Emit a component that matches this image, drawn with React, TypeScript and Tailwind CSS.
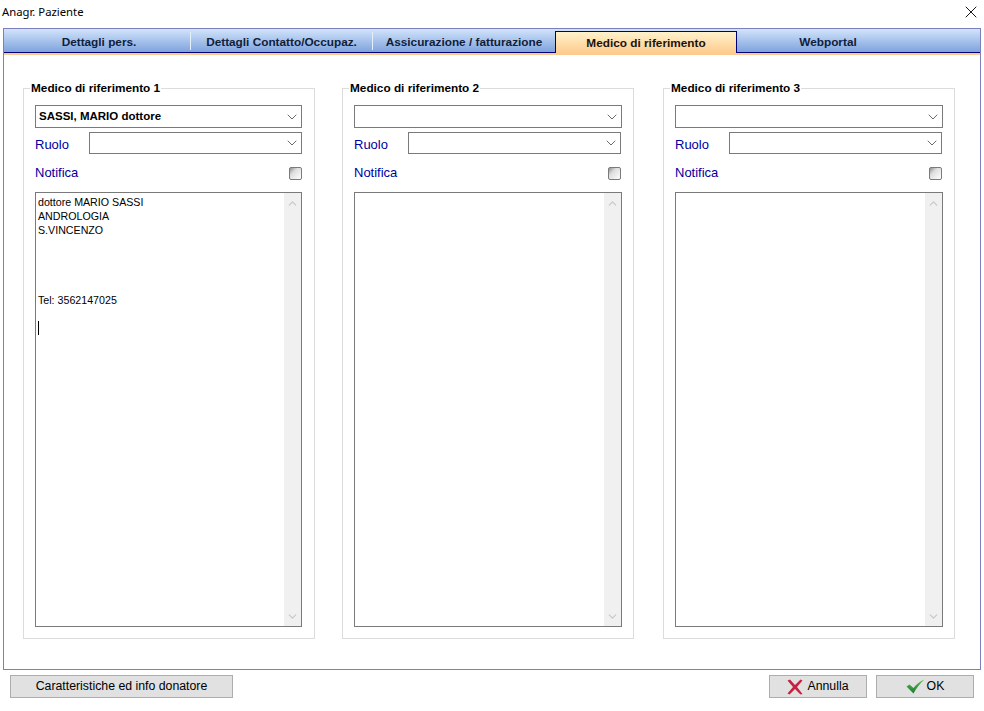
import { ChevronDown, ChevronUp, X } from "lucide-react";

const tabs = [
  { label: "Dettagli pers.", width: "w-[187px] pl-1" },
  { label: "Dettagli Contatto/Occupaz.", width: "w-[182px]" },
  { label: "Assicurazione / fatturazione", width: "w-[182px]" },
  { label: "Medico di riferimento", width: "w-[182px]", active: true },
  { label: "Webportal", width: "w-[182px]" },
];

function Combo({ value, className }: { value?: string; className: string }) {
  return (
    <div
      className={`flex items-center justify-between border border-[#7a7a7a] bg-white pl-[3px] pr-[1px] text-[11.5px] font-bold text-black ${className}`}
    >
      <span>{value}</span>
      <ChevronDown size={16} strokeWidth={1.2} className="text-[#444]" />
    </div>
  );
}

function Referral({
  title,
  className,
  boxWidth,
  lines,
}: {
  title: string;
  className: string;
  boxWidth: string;
  lines?: boolean;
}) {
  return (
    <div className={`relative h-[551px] w-[292px] shrink-0 border border-[#dcdcdc] pl-[11px] pt-[16px] ${className}`}>
      <span className="absolute left-[6px] top-[-8px] bg-white px-px text-[11.8px] font-bold leading-[14px] text-black">
        {title}
      </span>
      <Combo value={lines ? "SASSI, MARIO dottore" : undefined} className={`h-[23px] ${boxWidth}`} />
      <div className="mt-[4px] flex h-[22px] w-[267px] items-center justify-between">
        <span className="mt-[3px] text-[13px] text-[#0000a0]">Ruolo</span>
        <Combo className="h-[22px] w-[213px]" />
      </div>
      <div className="flex h-[38px] w-[267px] items-start justify-between pt-[11px] text-[13px] leading-[16px] text-[#0000a0]">
        <span>Notifica</span>
        <span className="mt-[2px] h-[13px] w-[13px] rounded-[2px] border border-[#7a7a7a] bg-gradient-to-br from-[#909090] via-[#dedede] via-35% to-white" />
      </div>
      <div className={`flex h-[435px] border border-[#7a7a7a] bg-white ${boxWidth}`}>
        <div className="flex-1 pl-[2px] pt-[2px] text-[10.67px] leading-[14px] text-black">
          {lines && (
            <>
              <div>dottore MARIO SASSI</div>
              <div>ANDROLOGIA</div>
              <div>S.VINCENZO</div>
              <div className="mt-[56px]">Tel: 3562147025</div>
              <div className="mt-[14px] h-[14px] w-px bg-black" />
            </>
          )}
        </div>
        <div className="flex w-[17px] flex-col items-center justify-between bg-[#f0f0f0] pb-[3px] pt-[4px] text-[#c8c8c8]">
          <ChevronUp size={13} strokeWidth={2.2} />
          <ChevronDown size={13} strokeWidth={2.2} />
        </div>
      </div>
    </div>
  );
}

export default function App() {
  return (
    <div className="flex h-[711px] w-[984px] flex-col overflow-hidden bg-white font-['Liberation_Sans',sans-serif]">
      <div className="flex h-[28px] shrink-0 items-start justify-between pl-[2px] pr-[3px] pt-[4px]">
        <span className="font-['Noto_Sans',sans-serif] text-[11.3px] leading-[16px] text-black">Anagr. Paziente</span>
        <X size={20} strokeWidth={1.1} className="-mt-[2px] text-black" />
      </div>

      <div className="ml-[3px] h-[642px] w-[978px] shrink-0 border border-[#7b7fc0]">
        <div className="flex h-[24px] border-b border-[#00007d] bg-gradient-to-b from-[#d3e4fb] to-[#7ea3dc] pt-[2px]">
          {tabs.map((t, i) => (
            <div
              key={t.label}
              className={`flex shrink-0 items-center justify-center text-[11.8px] font-bold ${t.width} ${
                t.active
                  ? "relative h-[22px] border-x border-t border-[#00007d] bg-gradient-to-b from-[#fff2cc] to-[#fdcb8e] pt-[2px] text-[#1a1208]"
                  : i < 2
                    ? "mt-px h-[18px] border-r border-[#e6eefa] pt-[4px] text-[#10203a]"
                    : "mt-px h-[18px] pt-[4px] text-[#10203a]"
              }`}
            >
              {t.label}
            </div>
          ))}
        </div>
        <div className="h-[2px] bg-[#fdcb8e]" />
        <div className="flex pl-[19px] pt-[33px]">
          <Referral title="Medico di riferimento 1" className="" boxWidth="w-[267px]" lines />
          <Referral title="Medico di riferimento 2" className="ml-[27px]" boxWidth="w-[268px]" />
          <Referral title="Medico di riferimento 3" className="ml-[29px]" boxWidth="w-[268px]" />
        </div>
      </div>

      <div className="flex pl-[10px] pr-[10px] pt-[5px] text-[12.3px] text-black">
        <button className="h-[23px] w-[223px] border border-[#adadad] bg-[#e1e1e1]">
          Caratteristiche ed info donatore
        </button>
        <button className="ml-auto flex h-[23px] w-[98px] items-center justify-center gap-[4px] border border-[#adadad] bg-[#e1e1e1]">
          <svg width="16" height="16" viewBox="0 0 16 16">
            <path d="M0.5 1.5 L3 0.5 L8 6 L13.5 0.5 L15.5 1.5 L10 8 L15.5 15 L13.5 15.5 L8 10 L2.5 15.5 L0.5 14.5 L6 8 Z" fill="#c4223f" />
          </svg>
          Annulla
        </button>
        <button className="ml-[9px] flex h-[23px] w-[98px] items-center justify-center gap-[2px] border border-[#adadad] bg-[#e1e1e1]">
          <svg width="19" height="15" viewBox="0 0 19 15">
            <defs>
              <linearGradient id="okFill" x1="0" y1="0" x2="0" y2="1">
                <stop offset="0" stopColor="#5cc04e" />
                <stop offset="1" stopColor="#1c7a2e" />
              </linearGradient>
            </defs>
            <path d="M0.5 7.5 L3.5 5.5 L7.5 9 C10.5 5 14 2.5 18.5 0.5 C14 4.5 10.5 9 7.5 14.5 Z" fill="url(#okFill)" />
          </svg>
          OK
        </button>
      </div>
    </div>
  );
}
